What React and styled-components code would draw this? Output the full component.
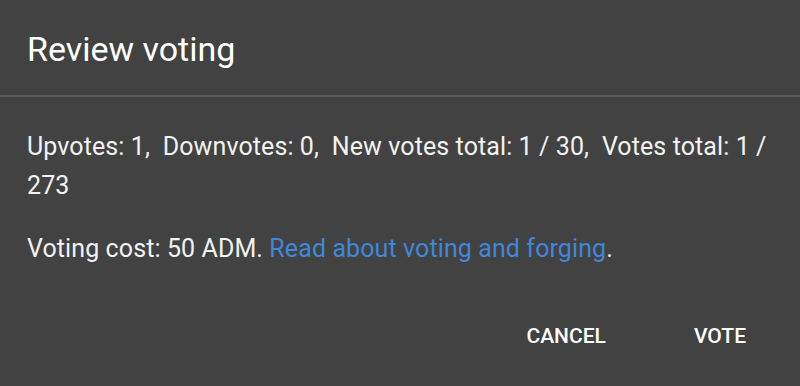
import React from "react";
import styled, { createGlobalStyle } from "styled-components";

const Global = createGlobalStyle`
  html, body { margin: 0; padding: 0; background: #424242; }
  body { font-family: Roboto, "Noto Sans", sans-serif; -webkit-font-smoothing: antialiased; }
`;

const Dialog = styled.div`
  width: 800px;
  height: 386px;
  background: #424242;
  color: #f2f2f2;
  display: flex;
  flex-direction: column;
  box-sizing: border-box;
`;

const Header = styled.div`
  height: 97px;
  box-sizing: border-box;
  display: flex;
  align-items: center;
  padding: 3px 27px 0;
  border-bottom: 2px solid #5a5a5a;
`;

const Title = styled.h2`
  margin: 0;
  font-size: 34px;
  font-weight: 400;
  color: #ffffff;
  letter-spacing: 0;
`;

const Body = styled.div`
  padding: 30px 18px 0 27px;
  font-size: 25px;
  line-height: 39px;
  letter-spacing: 0.1px;
`;

const Para = styled.p`
  margin: 0 0 24px;
`;

const Link = styled.a`
  color: #3f87dc;
  text-decoration: none;
`;

const Actions = styled.div`
  margin-top: auto;
  display: flex;
  justify-content: flex-end;
  gap: 88px;
  padding: 0 54px 30px;
`;

const Button = styled.button`
  background: none;
  border: none;
  padding: 8px 0;
  color: #ffffff;
  font-family: inherit;
  font-size: 21px;
  font-weight: 500;
  letter-spacing: 0;
  text-transform: uppercase;
  cursor: pointer;
`;

export default function App() {
  const items = [
    "Upvotes: 1,",
    "Downvotes: 0,",
    "New votes total: 1\u00a0/\u00a030,",
    "Votes total: 1\u00a0/ 273",
  ];
  return (
    <>
      <Global />
      <Dialog>
        <Header>
          <Title>Review voting</Title>
        </Header>
        <Body>
          <Para>{items.join("\u2005 ")}</Para>
          <Para>
            Voting cost: 50 ADM.{" "}
            <Link href="#">Read about voting and forging</Link>.
          </Para>
        </Body>
        <Actions>
          <Button>Cancel</Button>
          <Button>Vote</Button>
        </Actions>
      </Dialog>
    </>
  );
}
